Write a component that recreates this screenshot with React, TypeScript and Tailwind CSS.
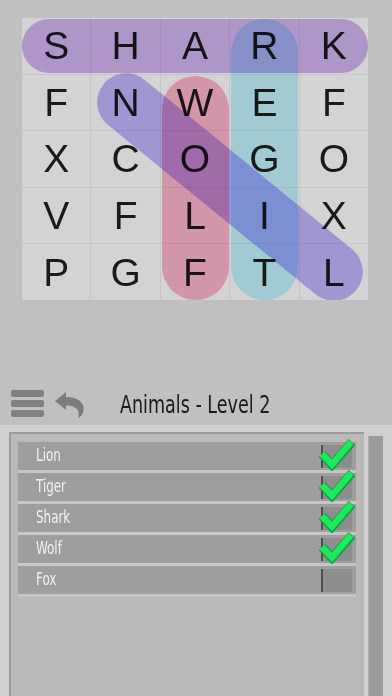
import React from "react";

const rows = ["SHARK", "FNWEF", "XCOGO", "VFLIX", "PGFTL"];

const words = [
  { name: "Lion", found: true },
  { name: "Tiger", found: true },
  { name: "Shark", found: true },
  { name: "Wolf", found: true },
  { name: "Fox", found: false },
];

const condensed = { fontFamily: '"DejaVu Sans Condensed", "DejaVu Sans", sans-serif' };

function Check() {
  return (
    <svg width="38" height="34" viewBox="0 0 38 34" className="absolute right-[0px] top-[-5px]">
      <path d="M4 17 L14 28 L34 5" fill="none" stroke="#12a347" strokeWidth="9" strokeLinejoin="miter" />
      <path d="M4 17 L14 27.5 L33 5" fill="none" stroke="#1ee85c" strokeWidth="6.5" strokeLinejoin="miter" />
    </svg>
  );
}

function UndoIcon() {
  return (
    <svg width="30" height="26" viewBox="0 0 30 26">
      <path
        d="M0 9 L11 0 V5 C22 5 30 10 28.5 18.5 C27.8 22 26 24.5 23 26 C25 21 24 13.5 11 13.5 V18 Z"
        fill="#7c7c7c"
      />
    </svg>
  );
}

export default function App() {
  return (
    <div className="flex h-[696px] w-[392px] flex-col overflow-hidden bg-[#c0c0c0]">
      <div className="h-[380px] pl-[22px] pt-[18px]">
        <div className="relative isolate h-[282px] w-[346px] overflow-hidden">
          <div className="grid h-full w-full grid-cols-5 grid-rows-5 gap-px bg-[#c6c6c6]">
            {rows.map((row, r) =>
              row.split("").map((ch, c) => (
                <div
                  key={`${r}-${c}`}
                  className="flex items-center justify-center bg-[#d3d3d3] text-[39px] leading-none text-[#1a1a1a]"
                  style={{ fontFamily: '"Liberation Sans", Arial, sans-serif' }}
                >
                  {ch}
                </div>
              ))
            )}
          </div>

          {/* found word highlights */}
          <div className="absolute left-[44.6px] top-[140.2px] h-[58px] w-[326px] rotate-[39.2deg] rounded-full bg-[#c1b5fe] mix-blend-multiply" />
          <div className="absolute left-0 top-px h-[54px] w-[346px] rounded-full bg-[#d3b5f2] mix-blend-multiply" />
          <div className="absolute left-[140px] top-[58px] h-[224px] w-[67px] rounded-full bg-[#feb5cd] mix-blend-multiply" />
          <div className="absolute left-[209px] top-px h-[281px] w-[67px] rounded-full bg-[#c4f4ff] mix-blend-multiply" />
        </div>
      </div>

      <div className="flex h-[45px] items-center">
        <div className="ml-[11px] mt-[2px] flex w-[33px] flex-col gap-[3px]">
          <div className="h-[7px] rounded-[2px] bg-[#818181]" />
          <div className="h-[7px] rounded-[2px] bg-[#818181]" />
          <div className="h-[7px] rounded-[2px] bg-[#818181]" />
        </div>
        <div className="ml-[11px] mt-[5px]">
          <UndoIcon />
        </div>
        <div
          className="ml-[35px] mt-[4px] origin-left scale-x-[0.78] whitespace-nowrap text-[25px] text-[#1a1a1a]"
          style={condensed}
        >
          Animals - Level 2
        </div>
      </div>

      <div className="flex flex-1 bg-[#d0d0d0] pt-[7px]">
        <div className="ml-[9px] flex w-[355px] flex-col border-l-2 border-t-2 border-[#9a9a9a] bg-[#b9b9b9] pl-[7px] pr-[8px] pt-[8px]">
          {words.map((w) => (
            <div
              key={w.name}
              className="relative box-border flex h-[31px] items-center border-b-[3px] border-[#c6c6c6] bg-[#9e9e9e] pl-[18px]"
            >
              <span
                className="inline-block origin-left scale-x-[0.78] text-[17px] text-[#f2f2f2]"
                style={condensed}
              >
                {w.name}
              </span>
              <div className="absolute right-[4px] top-[3px] h-[23px] w-[31px] border-l-2 border-[#4e4e4e] bg-[#8e8e8e]" />
              {w.found && <Check />}
            </div>
          ))}
        </div>
        <div className="ml-[4px] mt-[4px] w-[15px] border-l border-[#b0b0b0] bg-[#9a9a9a]" />
      </div>
    </div>
  );
}
